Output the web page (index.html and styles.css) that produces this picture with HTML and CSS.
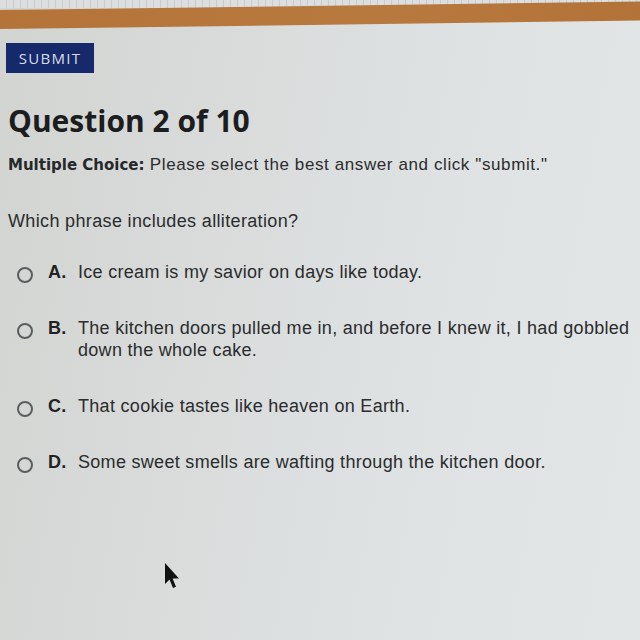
FILE: index.html
```html
<!DOCTYPE html>
<html>
<head>
<meta charset="utf-8">
<link rel="stylesheet" href="styles.css">
</head>
<body>
<div class="topstrip"></div>
<div class="bar"></div>
<main class="content">
  <button class="submit">SUBMIT</button>
  <h1 class="title">Question 2 of 10</h1>
  <p class="instr"><b class="mc">Multiple Choice:</b> Please select the best answer and click "submit."</p>
  <p class="prompt">Which phrase includes alliteration?</p>
  <ul class="options">
    <li class="opt"><span class="radio"></span><span class="letter">A.</span><span class="text">Ice cream is my savior on days like today.</span></li>
    <li class="opt"><span class="radio"></span><span class="letter">B.</span><span class="text">The kitchen doors pulled me in, and before I knew it, I had gobbled down the whole cake.</span></li>
    <li class="opt"><span class="radio"></span><span class="letter">C.</span><span class="text">That cookie tastes like heaven on Earth.</span></li>
    <li class="opt"><span class="radio"></span><span class="letter">D.</span><span class="text">Some sweet smells are wafting through the kitchen door.</span></li>
  </ul>
</main>
<svg class="cursor" width="16" height="28" viewBox="0 0 16 28"><path d="M1 1 L1 22 L5.5 17.5 L9 26 L12 24.8 L8.6 16.5 L15 16.5 Z" fill="#111"/></svg>
</body>
</html>
```
FILE: styles.css
```css
html, body { margin: 0; padding: 0; }
body {
  width: 640px;
  height: 640px;
  overflow: hidden;
  position: relative;
  background: linear-gradient(100deg, #d2d4d1 0%, #d9dcdb 35%, #e0e3e4 70%, #e3e6e7 100%);
  font-family: "Liberation Sans", Arial, sans-serif;
  color: #2a2c2d;
}
.topstrip {
  height: 8px;
  background: repeating-linear-gradient(90deg, #dcdedf 0 6px, #c9cccd 6px 7px);
}
.bar {
  height: 19px;
  background: linear-gradient(90deg, #b47439, #b8793f 60%, #b27238);
  transform: skewY(-0.75deg);
  transform-origin: left top;
  margin-top: 2px;
}
.content {
  padding: 0 0 0 8px;
}
.submit {
  display: block;
  margin: 14px 0 0 -2px;
  width: 88px;
  height: 30px;
  border: 0;
  padding: 0;
  background: #15296b;
  color: #d8dde8;
  font-family: "Open Sans", "DejaVu Sans", sans-serif;
  font-size: 15px;
  letter-spacing: 1.3px;
  text-align: center;
}
.title {
  margin: 30px 0 0 0;
  font-family: "Open Sans", sans-serif;
  font-weight: 700;
  font-size: 30px;
  line-height: 36px;
  color: #1c1d1e;
}
.instr {
  margin: 16px 0 0 0;
  font-size: 17px;
  line-height: 20px;
  letter-spacing: 0.6px;
}
.mc {
  font-family: "DejaVu Sans", sans-serif;
  font-size: 15px;
  letter-spacing: 0;
  color: #26282a;
}
.prompt {
  margin: 35px 0 0 0;
  font-size: 18px;
  line-height: 22px;
  letter-spacing: 0.35px;
}
.options {
  list-style: none;
  margin: 29px 0 0 0;
  padding: 0;
  display: flex;
  flex-direction: column;
  gap: 34px;
}
.opt {
  display: flex;
  align-items: flex-start;
  font-size: 18px;
  line-height: 22px;
  letter-spacing: 0.3px;
}
.radio {
  flex: none;
  width: 12px;
  height: 12px;
  border: 2px solid #5b5d5e;
  border-radius: 50%;
  margin: 6px 0 0 9px;
}
.letter {
  flex: none;
  width: 30px;
  margin-left: 15px;
  font-weight: 700;
  color: #222;
}
.text {
  flex: 1;
}
.cursor {
  position: absolute;
  left: 164px;
  top: 562px;
}
```
